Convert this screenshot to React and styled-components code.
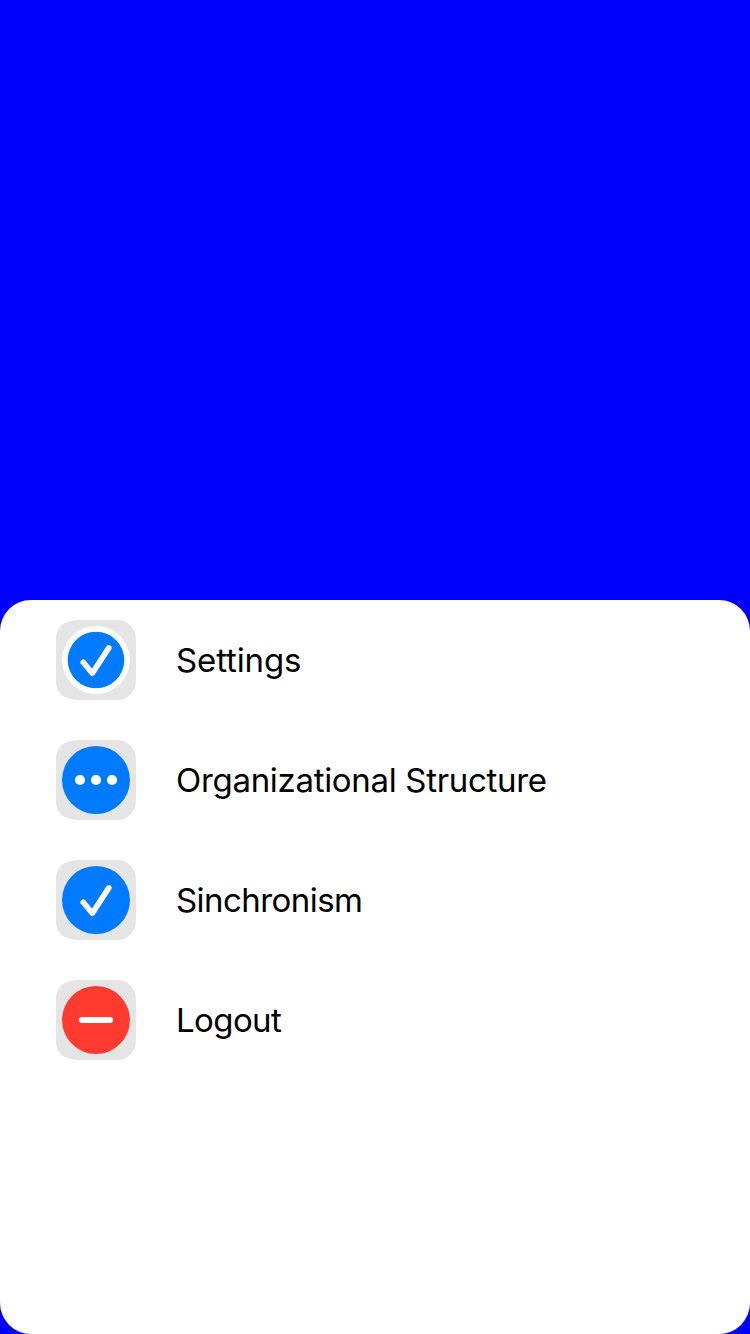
import React from 'react';
import styled, { createGlobalStyle } from 'styled-components';

const GlobalStyle = createGlobalStyle`
  * { box-sizing: border-box; }
  body { margin: 0; background: #0000ff; }
`;

const Screen = styled.div`
  height: 1334px;
  padding-top: 600px;
  background: #0000ff;
  display: flex;
  flex-direction: column;
`;

const Sheet = styled.main`
  flex: 1;
  background: #fff;
  border-radius: 31px;
  overflow: hidden;
`;

const Menu = styled.ul`
  list-style: none;
  margin: 0;
  padding: 0 56px;
`;

const MenuItem = styled.li`
  display: flex;
  align-items: center;
  gap: 40px;
  height: 120px;
`;

const IconTile = styled.svg`
  display: block;
  flex: none;
  width: 80px;
  height: 80px;
`;

const Label = styled.span`
  font: 400 33px/44px Inter, sans-serif;
  letter-spacing: ${(p) => p.$tracking}px;
  color: #000;
  white-space: nowrap;
`;

const Check = () => (
  <path d="M27.2 42.3 L36.3 53.2 L52.8 27.9" fill="none" stroke="#fff" strokeWidth="5.6" strokeLinecap="round" strokeLinejoin="round" />
);

const glyphs = {
  ringed: (
    <>
      <circle cx="40" cy="40" r="34" fill="#fff" />
      <circle cx="40" cy="40" r="28.3" fill="#007aff" />
      <Check />
    </>
  ),
  more: (
    <>
      <circle cx="40" cy="40" r="34" fill="#007aff" />
      {[24, 40, 56].map((x) => <circle key={x} cx={x} cy="40" r="5.1" fill="#fff" />)}
    </>
  ),
  check: (
    <>
      <circle cx="40" cy="40" r="34" fill="#007aff" />
      <Check />
    </>
  ),
  minus: (
    <>
      <circle cx="40" cy="40" r="34" fill="#ff3b30" />
      <path d="M26 40H54" stroke="#fff" strokeWidth="6" strokeLinecap="round" />
    </>
  ),
};

const items = [
  { label: 'Settings', glyph: 'ringed', tracking: -0.12 },
  { label: 'Organizational Structure', glyph: 'more', tracking: -0.31 },
  { label: 'Sinchronism', glyph: 'check', tracking: -0.56 },
  { label: 'Logout', glyph: 'minus', tracking: -0.6 },
];

export default function App() {
  return (
    <Screen>
      <GlobalStyle />
      <Sheet>
        <Menu>
          {items.map(({ label, glyph, tracking }) => (
            <MenuItem key={label}>
              <IconTile viewBox="0 0 80 80" aria-hidden="true">
                <path d="M24 0H60C72 0 80 8 80 20V60C80 72 72 80 60 80H24C8 80 0 74 0 60V20C0 6 8 0 24 0Z" fill="#e5e5e5" />
                {glyphs[glyph]}
              </IconTile>
              <Label $tracking={tracking}>{label}</Label>
            </MenuItem>
          ))}
        </Menu>
      </Sheet>
    </Screen>
  );
}
